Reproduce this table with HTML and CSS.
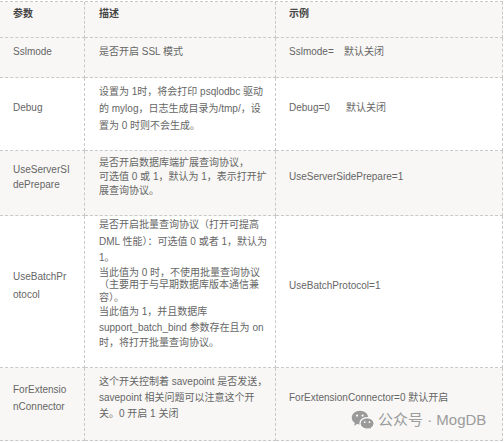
FILE: index.html
```html
<!DOCTYPE html>
<html lang="zh-CN">
<head>
<meta charset="utf-8">
<title>参数</title>
<link rel="stylesheet" href="styles.css">
</head>
<body>
<div class="page">
<table class="params">
<thead>
<tr class="r-head"><th class="c1">参数</th><th class="c2">描述</th><th class="c3">示例</th></tr>
</thead>
<tbody>
<tr class="r-ssl alt">
<td>Sslmode</td>
<td>是否开启 SSL 模式</td>
<td><span class="key k-ssl">Sslmode=</span>默认关闭</td>
</tr>
<tr class="r-debug">
<td>Debug</td>
<td><div class="lh17">设置为 1时，将会打印 psqlodbc 驱动<br>的 mylog，日志生成目录为/tmp/，设<br>置为 0 时则不会生成。</div></td>
<td><span class="key k-debug">Debug=0</span>默认关闭</td>
</tr>
<tr class="r-server alt">
<td><div class="lh15">UseServerSI<br>dePrepare</div></td>
<td><div class="lh14">是否开启数据库端扩展查询协议，<br>可选值 0 或 1，默认为 1，表示打开扩<br>展查询协议。</div></td>
<td>UseServerSidePrepare=1</td>
</tr>
<tr class="r-batch">
<td><div class="lh18">UseBatchPr<br>otocol</div></td>
<td><div class="batch-desc"><div class="bp1">是否开启批量查询协议（打开可提高<br>DML 性能）：可选值 0 或者 1，默认为<br>1。</div><div class="bp2">当此值为 0 时，不使用批量查询协议<br>（主要用于与早期数据库版本通信兼<br>容）。</div><div class="bp3">当此值为 1，并且数据库<br>support_batch_bind 参数存在且为 on<br>时，将打开批量查询协议。</div></div></td>
<td>UseBatchProtocol=1</td>
</tr>
<tr class="r-ext alt">
<td><div class="lh17">ForExtensio<br>nConnector</div></td>
<td><div class="lh16">这个开关控制着 savepoint 是否发送，<br>savepoint 相关问题可以注意这个开<br>关。0 开启 1 关闭</div></td>
<td>ForExtensionConnector=0 默认开启</td>
</tr>
</tbody>
</table>
<div class="watermark">
<svg class="wm-icon" width="24" height="20" viewBox="0 0 24 20" aria-hidden="true">
<path d="M9 0.8C4.4 0.8 0.8 3.9 0.8 7.7c0 2.2 1.2 4.1 3.1 5.4l-0.8 2.6 3-1.6c0.9 0.3 1.9 0.4 2.9 0.4 4.6 0 8.2-3.1 8.2-6.8S13.6 0.8 9 0.8z" fill="#9a9a9a"/>
<path d="M16.2 7.6c-4 0-7.2 2.6-7.2 5.8s3.2 5.8 7.2 5.8c0.8 0 1.6-0.1 2.3-0.3l2.5 1.3-0.7-2.2c1.7-1.1 2.9-2.8 2.9-4.6 0-3.2-3.2-5.8-7-5.8z" fill="#9a9a9a" stroke="#ffffff" stroke-width="1.2"/>
<circle cx="6.1" cy="5.6" r="1.1" fill="#ffffff"/>
<circle cx="11.6" cy="5.6" r="1.1" fill="#ffffff"/>
<circle cx="13.7" cy="12.2" r="0.9" fill="#ffffff"/>
<circle cx="18.5" cy="12.2" r="0.9" fill="#ffffff"/>
</svg>
<span class="wm-text">公众号 · MogDB</span>
</div>
</div>
</body>
</html>
```

FILE: styles.css
```css
html, body {
  margin: 0;
  padding: 0;
  background: #ffffff;
}

body {
  padding-top: 1px;
  font-family: "Liberation Sans", "Noto Sans CJK SC", sans-serif;
  font-size: 10px;
  color: #666666;
}

.page {
  position: relative;
  width: 504px;
  height: 442px;
}

.params {
  table-layout: fixed;
  width: 503px;
  border-collapse: separate;
  border-spacing: 0;
  border-top: 1px dashed #c9c9c9;
}

.params th,
.params td {
  box-sizing: border-box;
  border-right: 1px dashed #c9c9c9;
  border-bottom: 1px dashed #c9c9c9;
  padding: 0 8px 12px 13px;
  vertical-align: middle;
  text-align: left;
  line-height: 14px;
  white-space: nowrap;
  overflow: hidden;
}

.params th {
  font-weight: bold;
  color: #444444;
}

.params th.c1 { width: 85px; }
.params th.c2 { width: 191px; padding-left: 14px; }
.params th.c3 { width: 227px; }

.params td:nth-child(2) { padding-left: 14px; }

.r-head { height: 36px; background: #f8f7f5; }
.r-ssl { height: 40px; }
.r-debug { height: 73px; }
.r-server { height: 65px; }
.r-batch { height: 152px; }
.r-ext { height: 73px; }

.alt { background: #f8f7f5; }

.lh14 { line-height: 14px; }
.lh15 { line-height: 15px; }
.lh16 { line-height: 16px; }
.lh17 { line-height: 17px; }
.lh18 { line-height: 18px; }

.batch-desc { margin-bottom: 3px; }
.bp1 { line-height: 16.5px; }
.bp2 { line-height: 12.5px; }
.bp3 { line-height: 15.5px; }

.key { display: inline-block; }
.k-ssl { width: 55px; }
.k-debug { width: 57px; }

.watermark {
  position: absolute;
  left: 351px;
  top: 409px;
  display: flex;
  align-items: center;
  gap: 3px;
}

.wm-icon { display: block; }

.wm-text {
  font-family: "Liberation Sans", "Noto Sans CJK SC", sans-serif;
  font-size: 15px;
  line-height: 20px;
  color: #9c9c9c;
}
```
